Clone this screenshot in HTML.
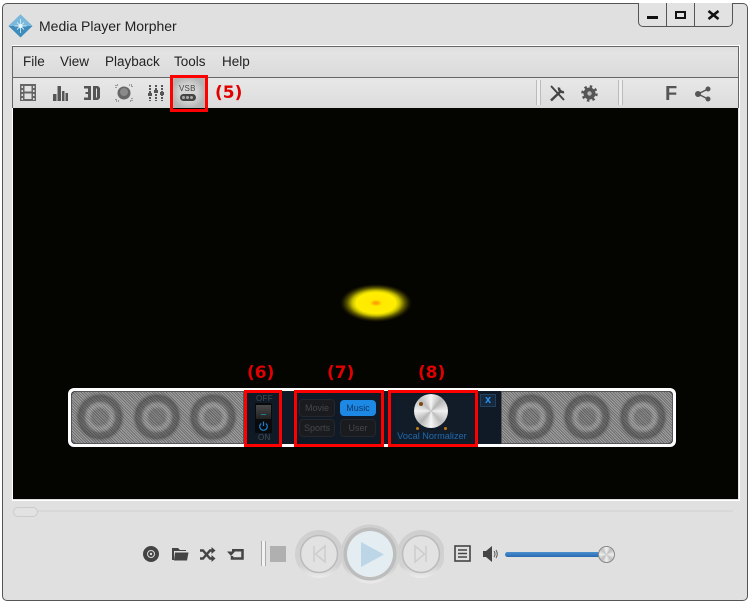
<!DOCTYPE html>
<html><head><meta charset="utf-8"><style>
html,body{margin:0;padding:0;background:#fff}
#r{position:relative;width:751px;height:603px;overflow:hidden;background:#fff;font-family:"Liberation Sans",sans-serif}
#r div,#r svg,#r span{position:absolute;box-sizing:border-box}
.m{font-size:13.5px;color:#222;top:54px;line-height:16px;white-space:nowrap}
.red{border:3px solid #f00}
.lab{color:#e00000;font-weight:bold;font-size:17px;font-family:"DejaVu Sans",sans-serif;line-height:20px;white-space:nowrap}
.sp{background:
 repeating-linear-gradient(45deg,rgba(60,60,60,.4) 0 1px,rgba(190,190,190,.3) 1px 2px),
 #929292;border:1px solid #555;}
.b{border-radius:4px;font-size:9px;text-align:center;line-height:16px;background:#191b1e;border:1px solid #24272b;color:#45484b;width:36px;height:18px}
</style></head><body><div id="r">
<div style="left:2px;top:3px;width:746px;height:598px;background:#e0e0e0;border:1px solid #555;border-radius:5px"></div>
<svg style="left:8px;top:13px" width="26" height="26" viewBox="0 0 26 26"><path d="M12.500 1.500L24.500 13L12.500 24.500L.5 13Z" fill="#3f8cbc"/><path d="M12.500 1.500L24.500 13H.5Z" fill="#7ab9dc"/><path d="M12.500 6L12.500 20M6.500 13H18.500M9 9.500L16 16.500M16 9.500L9 16.500" stroke="#cfe8f4" stroke-width=".9"/><circle cx="12.500" cy="13" r="2" fill="#eaf6fb"/></svg>
<div style="left:39px;top:17px;font-size:14px;line-height:18px;color:#222;white-space:nowrap">Media Player Morpher</div>

<div style="left:638px;top:3px;width:95px;height:24px;border:1px solid #555;border-top:0;border-radius:0 0 5px 5px;background:#e2e2e2"></div>
<div style="left:666px;top:3px;width:1px;height:23px;background:#555"></div>
<div style="left:694px;top:3px;width:1px;height:23px;background:#555"></div>
<div style="left:647px;top:16px;width:11px;height:3px;background:#111"></div>
<div style="left:675px;top:11px;width:11px;height:8px;border:2px solid #111"></div>
<svg style="left:707px;top:10px" width="13" height="10" viewBox="0 0 13 10"><path d="M1.500 1L11.500 9M11.500 1L1.500 9" stroke="#111" stroke-width="2.600"/></svg>

<div style="left:12px;top:45px;width:728px;height:456px;border:1px solid #fff;outline:0"></div>
<div style="left:12px;top:46px;width:727px;height:32px;background:linear-gradient(#e0e0e0 0,#e0e0e0 4px,#e4e4e4 5px,#dadada 100%);border-left:1px solid #666;border-top:1px solid #666;border-right:1px solid #666"></div>
<div class="m" style="left:23px">File</div><div class="m" style="left:60px">View</div><div class="m" style="left:105px">Playback</div><div class="m" style="left:174px">Tools</div><div class="m" style="left:222px">Help</div>
<div style="left:12px;top:77px;width:727px;height:31px;background:linear-gradient(#e8e8e8,#dcdcdc);border:1px solid #666;border-width:1px 1px 0 1px"></div>
<div style="left:172px;top:77px;width:33px;height:32px;background:radial-gradient(closest-side,#d4d4d4 50%,#b4b4b4 100%)"></div>

<svg style="left:20px;top:84px" width="16" height="18" viewBox="0 0 16 18"><path fill-rule="evenodd" d="M0 0H16V17H0ZM1.500 2V4H3V2ZM1.500 6V8H3V6ZM1.500 10V12H3V10ZM1.500 14V16H3V14ZM13 2V4H14.500V2ZM13 6V8H14.500V6ZM13 10V12H14.500V10ZM13 14V16H14.500V14ZM4.500 2V7.500H11.500V2ZM4.500 9.500V15H11.500V9.500Z" fill="#666"/></svg>
<svg style="left:53px;top:85px" width="16" height="17" viewBox="0 0 16 17"><path d="M0 9H3.500V16H0ZM4.500 1H8V16H4.500ZM9 6H11.500V16H9ZM12.500 8H15V16H12.500Z" fill="#555"/></svg>
<svg style="left:83px;top:85px" width="18" height="16" viewBox="0 0 18 16"><path fill-rule="evenodd" d="M1 1H8V15H1V12.500H5V9H2.500V7H5V3.500H1ZM10 1H15L17 3V13L15 15H10ZM13 3.500V12.500H14V3.500Z" fill="#555"/></svg>
<svg style="left:115px;top:84px" width="18" height="18" viewBox="0 0 18 18"><circle cx="9" cy="9" r="6.500" fill="#666"/><circle cx="9" cy="8" r="4" fill="#8a8a8a"/><path d="M1 4V1H4M14 1H17V4M17 14V17H14M4 17H1V14" fill="none" stroke="#555" stroke-dasharray="1 1"/></svg>
<svg style="left:147px;top:84px" width="18" height="18" viewBox="0 0 18 18"><path d="M3 1V17M9 1V17M15 1V17" stroke="#555" stroke-width="2" stroke-dasharray="2 1"/><path d="M1 9H5V12H1ZM7 6H11V9H7ZM13 8H17V11H13Z" fill="#555"/></svg>
<div style="left:179px;top:85px;font-size:8px;line-height:8px;color:#444;white-space:nowrap;letter-spacing:.2px">VSB</div>
<div style="left:180px;top:94px;width:16px;height:7px;border-radius:3.500px;background:#444"></div>
<div style="left:182px;top:96px;width:3px;height:3px;border-radius:50%;background:#aaa"></div><div style="left:186px;top:96px;width:3px;height:3px;border-radius:50%;background:#aaa"></div><div style="left:190px;top:96px;width:3px;height:3px;border-radius:50%;background:#aaa"></div>

<div style="left:536px;top:80px;width:5px;height:25px;border:1px solid #bbb;border-width:0 1px;background:#eee"></div>
<div style="left:618px;top:80px;width:5px;height:25px;border:1px solid #bbb;border-width:0 1px;background:#eee"></div>
<svg style="left:549px;top:84px" width="18" height="18" viewBox="0 0 18 18"><path d="M2 2L15 16" stroke="#444" stroke-width="2"/><path d="M12.500 6.500L2 16.500" stroke="#444" stroke-width="2.500"/><path d="M10 3.500A4 4 0 0 0 15 8" fill="none" stroke="#444" stroke-width="2.500"/></svg>
<svg style="left:581px;top:85px" width="17" height="17" viewBox="0 0 17 17"><circle cx="8.500" cy="8.500" r="6" fill="#555"/><circle cx="8.500" cy="8.500" r="7" fill="none" stroke="#555" stroke-width="2.500" stroke-dasharray="2.500 3"/><circle cx="8.500" cy="8.500" r="2.200" fill="#bbb"/></svg>
<div style="left:665px;top:84px;font-size:20px;font-weight:bold;line-height:20px;color:#555">F</div>
<svg style="left:694px;top:86px" width="18" height="16" viewBox="0 0 18 16"><path d="M4 8L14 3M4 8L14 13" stroke="#555" stroke-width="1.500"/><circle cx="4" cy="8" r="3" fill="#555"/><circle cx="14" cy="3" r="2.500" fill="#555"/><circle cx="14" cy="13" r="2.500" fill="#555"/></svg>

<div style="left:13px;top:108px;width:725px;height:391px;background:#040400"></div>
<div style="left:340px;top:284px;width:72px;height:38px;background:radial-gradient(closest-side,#ff9a00 0,#ffb000 8%,#ffe800 16%,#ffee00 55%,#c8c000 66%,#5a5600 80%,#1a1800 92%,#040400 100%)"></div>

<div style="left:68px;top:388px;width:608px;height:59px;background:#fff;border-radius:6px"></div>
<div style="left:71px;top:391px;width:602px;height:53px;background:#101a26;border-radius:4px"></div>
<div class="sp" style="left:71px;top:391px;width:173px;height:53px;border-radius:5px 0 0 5px"></div>
<div class="sp" style="left:501px;top:391px;width:172px;height:53px;border-radius:0 5px 5px 0"></div>
<svg style="left:72px;top:392px" width="600" height="51" viewBox="0 0 600 51"><defs><radialGradient id="g"><stop offset="0" stop-color="#333" stop-opacity=".18"/><stop offset=".3" stop-color="#333" stop-opacity=".22"/><stop offset=".45" stop-color="#ddd" stop-opacity=".12"/><stop offset=".62" stop-color="#222" stop-opacity=".32"/><stop offset=".82" stop-color="#222" stop-opacity=".42"/><stop offset="1" stop-color="#888" stop-opacity="0"/></radialGradient></defs><g fill="url(#g)"><circle cx="28" cy="25" r="26"/><circle cx="85" cy="25" r="26"/><circle cx="141" cy="25" r="26"/><circle cx="459" cy="25" r="26"/><circle cx="515" cy="25" r="26"/><circle cx="571" cy="25" r="26"/></g></svg>

<div style="left:256px;top:395px;font-size:8px;line-height:8px;color:#474c53;letter-spacing:.3px">OFF</div>
<div style="left:258px;top:434px;font-size:8px;line-height:8px;color:#474c53;letter-spacing:.3px">ON</div>
<div style="left:255px;top:403px;width:17px;height:30px;background:#0a0a0c;border-radius:1px"></div>
<div style="left:256px;top:405px;width:15px;height:14px;background:linear-gradient(#484848,#222)"></div>
<div style="left:261px;top:414px;width:5px;height:1px;background:#1d7a90"></div>
<svg style="left:258px;top:421px" width="11" height="11" viewBox="0 0 11 11"><path d="M3.200 2.500A3.800 3.800 0 1 0 7.800 2.500M5.500 .5V5" fill="none" stroke="#1c7fd0" stroke-width="1.200"/></svg>

<div class="b" style="left:299px;top:399px">Movie</div>
<div class="b" style="left:340px;top:400px;background:#1e88e5;border-color:#1e88e5;color:#0c3a6a;height:16px;line-height:14px">Music</div>
<div class="b" style="left:299px;top:419px">Sports</div>
<div class="b" style="left:340px;top:419px">User</div>

<div style="left:396px;top:396px;width:78px;height:47px;background:#121c28"></div>
<div style="left:414px;top:394px;width:34px;height:34px;border-radius:50%;background:conic-gradient(#f6f6f6,#b4b4b4 12%,#f0f0f0 25%,#bcbcbc 38%,#f6f6f6 50%,#b4b4b4 62%,#f0f0f0 75%,#bcbcbc 88%,#f6f6f6)"></div>
<div style="left:419px;top:402px;width:4px;height:4px;border-radius:50%;background:#7a4a10"></div>
<div style="left:416px;top:427px;width:3px;height:3px;border-radius:50%;background:#c07a10"></div>
<div style="left:444px;top:427px;width:3px;height:3px;border-radius:50%;background:#c07a10"></div>
<div style="left:392px;top:431px;width:80px;font-size:9.200px;line-height:11px;text-align:center;color:#1f6ab0;white-space:nowrap">Vocal Normalizer</div>
<div style="left:480px;top:394px;width:16px;height:13px;background:#16283c;border:1px solid #23405e;color:#2a90f0;font-size:11px;font-weight:bold;line-height:10px;text-align:center">x</div>

<div class="red" style="left:170px;top:75px;width:38px;height:37px"></div>
<div class="red" style="left:244px;top:390px;width:38px;height:57px"></div>
<div class="red" style="left:294px;top:390px;width:90px;height:57px"></div>
<div class="red" style="left:388px;top:390px;width:90px;height:57px"></div>
<div class="lab" style="left:215px;top:83px">(5)</div>
<div class="lab" style="left:247px;top:363px">(6)</div>
<div class="lab" style="left:327px;top:363px">(7)</div>
<div class="lab" style="left:418px;top:363px">(8)</div>

<div style="left:38px;top:510px;width:695px;height:2px;background:#d8d8d8"></div>
<div style="left:13px;top:507px;width:25px;height:10px;border:1px solid #cccccc;border-radius:5px;background:#e2e2e2"></div>

<svg style="left:143px;top:546px" width="16" height="16" viewBox="0 0 16 16"><circle cx="8" cy="8" r="8" fill="#444"/><circle cx="8" cy="8" r="3.500" fill="none" stroke="#ddd"/><circle cx="8" cy="8" r="1.200" fill="#ddd"/></svg>
<svg style="left:171px;top:547px" width="18" height="14" viewBox="0 0 18 14"><path d="M1 1H7L9 3H15V4H3V13H1ZM4 5.500H17.500L16 13.500H3Z" fill="#444"/></svg>
<svg style="left:199px;top:547px" width="17" height="15" viewBox="0 0 17 15"><path d="M1 3.500H4L11 11.500H13M1 11.500H4L11 3.500H13" fill="none" stroke="#444" stroke-width="2.400"/><path d="M12.500 0L16.500 3.500L12.500 7ZM12.500 8L16.500 11.500L12.500 15Z" fill="#444"/></svg>
<svg style="left:227px;top:548px" width="17" height="13" viewBox="0 0 17 13"><path d="M5 2.200H15.500V10.500H5V8" fill="none" stroke="#444" stroke-width="2.500"/><path d="M0 3.500H8L4 8Z" fill="#444"/></svg>

<div style="left:261px;top:541px;width:5px;height:25px;border:1px solid #aaa;border-width:0 1px;background:#f2f2f2"></div>
<div style="left:270px;top:546px;width:16px;height:16px;background:#b0b0b0"></div>

<svg style="left:294px;top:520px" width="150" height="70" viewBox="0 0 150 70"><defs><linearGradient id="k" x1="0" y1="0" x2="0" y2="1"><stop offset="0" stop-color="#cfcfcf"/><stop offset=".75" stop-color="#d2d2d2"/><stop offset="1" stop-color="#ececec"/></linearGradient></defs>
<circle cx="25" cy="34" r="24" fill="url(#k)"/><circle cx="25" cy="34" r="18.500" fill="#e2e2e2" stroke="#bbb" stroke-width="1.500"/>
<circle cx="127" cy="34" r="24" fill="url(#k)"/><circle cx="127" cy="34" r="18.500" fill="#e2e2e2" stroke="#bbb" stroke-width="1.500"/>
<circle cx="76" cy="34" r="29.500" fill="url(#k)"/><circle cx="76" cy="34" r="26.500" fill="#bdbdbd"/><circle cx="76" cy="34" r="23" fill="#e4eef2"/>
<path d="M67 22L90 34.500L67 47Z" fill="#bcd6e8"/>
<path d="M20 26V42M31 26L21.500 34L31 42Z" fill="none" stroke="#cdcdcd" stroke-width="1.500"/>
<path d="M132 26V42M121 26L130.500 34L121 42Z" fill="none" stroke="#cdcdcd" stroke-width="1.500"/></svg>

<svg style="left:454px;top:545px" width="18" height="18" viewBox="0 0 18 18"><rect x="1" y="1" width="15" height="15" fill="none" stroke="#444" stroke-width="1.600"/><path d="M4 5H13M4 8.500H13M4 12H13" stroke="#444" stroke-width="1.500"/></svg>
<svg style="left:482px;top:546px" width="17" height="16" viewBox="0 0 17 16"><path d="M1 5H4L10 0V16L4 11H1Z" fill="#444"/><path d="M12 5Q14 8 12 11M14 4Q16.500 8 14 12" fill="none" stroke="#555"/></svg>
<div style="left:505px;top:552px;width:96px;height:5px;border-radius:3px;background:linear-gradient(#4a8fd0,#2a6ab0)"></div>
<div style="left:598px;top:546px;width:17px;height:17px;border-radius:50%;border:1px solid #888;background:conic-gradient(#f4f4f4,#bbb 12%,#eee 25%,#c0c0c0 38%,#f2f2f2 50%,#bbb 62%,#eee 75%,#c0c0c0 88%,#f4f4f4)"></div>
</div></body></html>
